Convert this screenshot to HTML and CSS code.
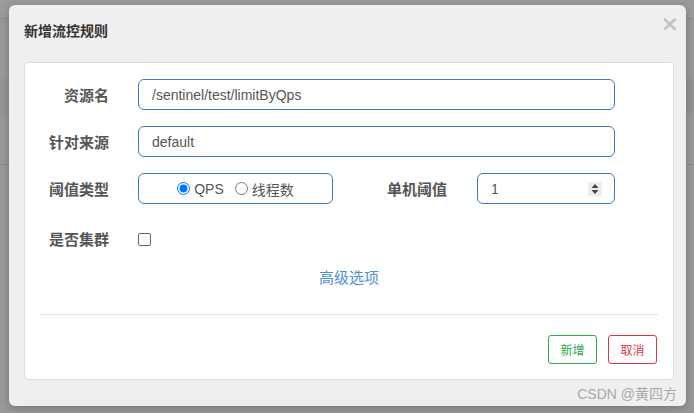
FILE: index.html
```html
<!DOCTYPE html>
<html lang="zh">
<head>
<meta charset="utf-8">
<title>新增流控规则</title>
<link rel="stylesheet" href="styles.css">
</head>
<body>
<div class="backdrop">
  <div class="bg-top"></div>
  <div class="bg-gap"></div>
  <div class="bg-band"></div>
  <div class="bg-gap2"></div>
  <div class="bg-rest"></div>
</div>

<div class="modal">
  <div class="modal-header">
    <h4 class="modal-title">新增流控规则</h4>
    <span class="close">&times;</span>
  </div>
  <div class="card">
    <div class="form">
      <label class="label">资源名</label>
      <div class="input wide">/sentinel/test/limitByQps</div>

      <label class="label">针对来源</label>
      <div class="input wide">default</div>

      <label class="label">阈值类型</label>
      <div class="split">
        <div class="input radios">
          <label class="radio"><input type="radio" name="grade" checked>QPS</label>
          <label class="radio"><input type="radio" name="grade">线程数</label>
        </div>
        <label class="label label-inline">单机阈值</label>
        <div class="input number">
          <span>1</span>
          <span class="spin">
            <svg width="14" height="14" viewBox="0 0 14 14"><path d="M3.5 6 L7 2 L10.5 6 Z M3.5 8 L7 12 L10.5 8 Z" fill="#444"/></svg>
          </span>
        </div>
      </div>

      <label class="label">是否集群</label>
      <div class="check-cell"><span class="checkbox"></span></div>
    </div>

    <div class="advanced">高级选项</div>
    <hr class="divider">
    <div class="actions">
      <button class="btn btn-ok">新增</button>
      <button class="btn btn-cancel">取消</button>
    </div>
  </div>
  <div class="watermark">CSDN @黄四方</div>
</div>
</body>
</html>
```

FILE: styles.css
```css
* { box-sizing: border-box; }
html, body {
  margin: 0;
  padding: 0;
  width: 694px;
  height: 413px;
  overflow: hidden;
  background: #999999;
  font-family: "Liberation Sans", Arial, "Noto Sans CJK SC", sans-serif;
}

.backdrop { display: flex; flex-direction: column; height: 413px; }
.bg-top { height: 19px; background: #9b9b9b; border-bottom: 1px solid #8a8a8a; }
.bg-gap { height: 60px; background: #999999; }
.bg-band { height: 36px; background: #949494; }
.bg-gap2 { height: 50px; background: #999999; border-bottom: 1px solid #8a8a8a; }
.bg-rest { flex: 1; background: #999999; }

.modal {
  position: absolute;
  left: 9px;
  top: 5px;
  width: 677px;
  height: 401px;
  background: #efefef;
  border-radius: 6px;
  box-shadow: 0 2px 8px rgba(0,0,0,0.25);
  display: flex;
  flex-direction: column;
}

.modal-header {
  display: flex;
  justify-content: space-between;
  align-items: flex-start;
  padding: 17px 7px 0 15px;
  height: 57px;
}
.modal-title {
  margin: 0;
  font-size: 14px;
  font-weight: bold;
  color: #333;
  line-height: 18px;
}
.close {
  font-family: "DejaVu Sans", sans-serif;
  font-size: 22px;
  font-weight: bold;
  color: #c2c2c2;
  line-height: 18px;
  margin-top: -7px;
}

.card {
  margin: 0 12px 0 15px;
  height: 318px;
  background: #fff;
  border: 1px solid #dcdcdc;
  border-radius: 4px;
  padding: 16px 58px 0 0;
  display: flex;
  flex-direction: column;
}

.form {
  display: grid;
  grid-template-columns: 84px 1fr;
  column-gap: 29px;
  row-gap: 16px;
  align-items: center;
}

.label {
  text-align: right;
  font-family: "Noto Sans CJK SC", sans-serif;
  font-size: 15px;
  font-weight: bold;
  color: #555;
  line-height: 20px;
}

.input {
  height: 31px;
  border: 1px solid #3a7cc0;
  border-radius: 6px;
  background: #fff;
  padding: 0 13px;
  display: flex;
  align-items: center;
  font-size: 14px;
  color: #555;
}

.split {
  display: flex;
  align-items: center;
}
.radios {
  width: 195px;
  justify-content: center;
  gap: 11px;
  padding: 0;
}
.radio {
  display: flex;
  align-items: center;
  font-family: "Liberation Sans", "Noto Sans CJK SC", sans-serif;
  font-size: 14px;
  color: #555;
}
.radio input {
  margin: 0 4px 0 0;
  width: 13px;
  height: 13px;
}
.label-inline {
  width: 114px;
  text-align: right;
  margin-right: 30px;
}
.number {
  width: 138px;
  justify-content: space-between;
  padding: 0 12px 0 13px;
}
.spin {
  width: 14px;
  height: 14px;
  background: #ececec;
  display: flex;
}

.check-cell {
  height: 38px;
  display: flex;
  align-items: center;
}
.checkbox {
  width: 13px;
  height: 13px;
  border: 1px solid #666;
  border-radius: 2px;
  background: #fff;
}

.advanced {
  margin: 9px 0 0 58px;
  text-align: center;
  font-family: "Noto Sans CJK SC", sans-serif;
  font-size: 15px;
  color: #4b8fd6;
  line-height: 20px;
}

.divider {
  margin: 27px 0 0 15px;
  border: 0;
  border-top: 1px solid #e5e5e5;
  margin-right: -43px;
}

.actions {
  display: flex;
  justify-content: flex-end;
  gap: 11px;
  margin: 20px -42px 0 0;
}
.btn {
  width: 49px;
  height: 29px;
  background: #fff;
  border-radius: 3px;
  font-family: "Noto Sans CJK SC", sans-serif;
  font-size: 12px;
  padding: 0;
}
.btn-ok { border: 1px solid #2eaa4a; color: #2eaa4a; }
.btn-cancel { border: 1px solid #dc3545; color: #dc3545; }

.watermark {
  position: absolute;
  right: 9px;
  bottom: 3px;
  font-family: "Liberation Sans", "Noto Sans CJK SC", sans-serif;
  font-size: 14px;
  color: #a9a9a9;
  line-height: 18px;
}
```
